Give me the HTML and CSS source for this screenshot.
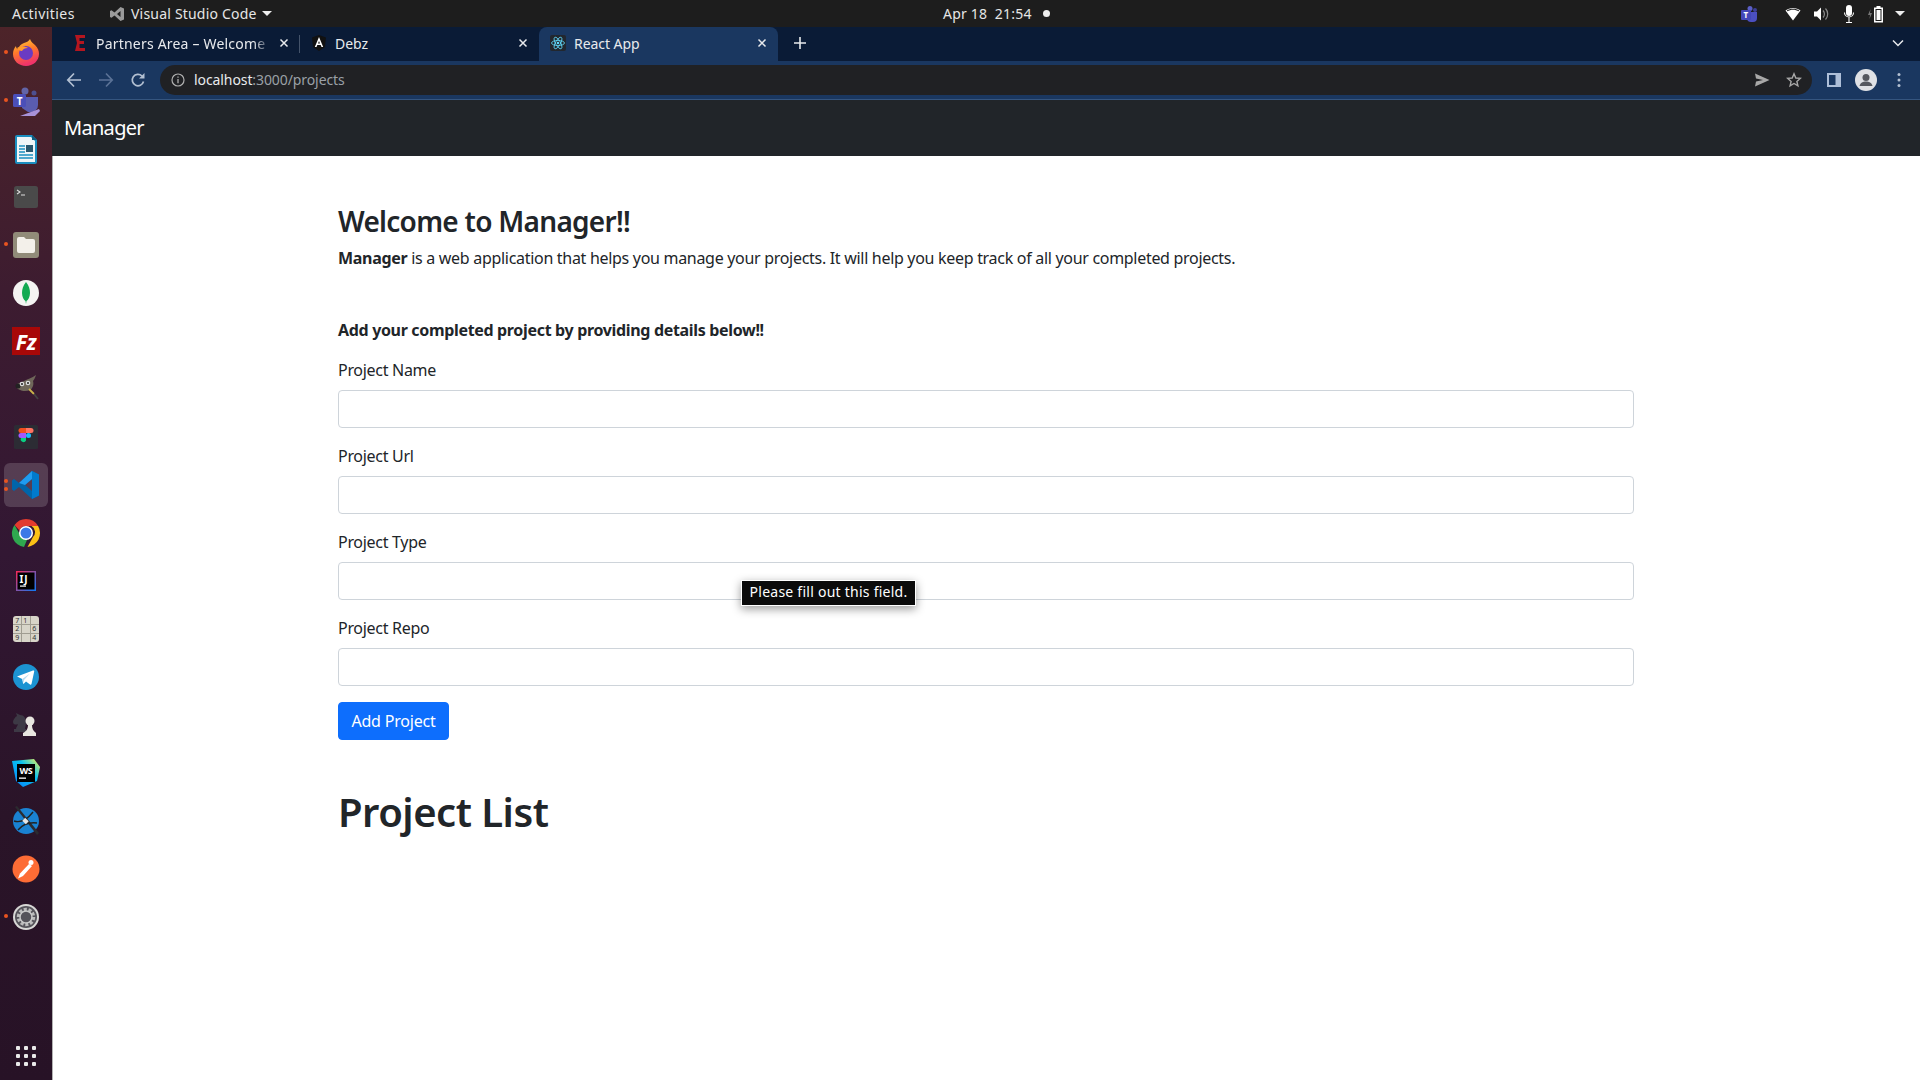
FILE: index.html
```html
<!DOCTYPE html>
<html>
<head>
  <meta charset="utf-8">
  <title>React App</title>
  <link rel="stylesheet" href="styles.css">
</head>
<body>

<!-- gnome top bar -->
<div class="topbar">
  <div class="top-left">
    <span class="activities">Activities</span>
    <svg class="top-app-icon" width="16" height="16" viewBox="0 0 16 16"><path fill="#9a9a9a" d="M11.5 1 15 2.600v10.800L11.500 15 5.500 9.500 2.500 11.800 1 11V5l1.500-.8 3 2.300zM11.500 5 8 8l3.500 3z"/></svg>
    <span class="top-app-name">Visual Studio Code</span>
    <span class="caret"></span>
  </div>
  <div class="clock">Apr 18&nbsp; 21:54</div>
  <span class="clock-dot"></span>
  <div class="tray">
    <svg class="tray-teams" width="18" height="18" viewBox="0 0 18 18"><circle cx="10" cy="3.500" r="2.500" fill="#5b5fc7"/><circle cx="15" cy="5" r="2" fill="#3d3f99"/><path fill="#4b4fc0" d="M7 7h10v6a4 4 0 0 1-4 4H11a4 4 0 0 1-4-4z"/><rect x="1" y="5" width="10" height="10" rx="1" fill="#4347b8"/><text x="6" y="13" class="tray-t">T</text></svg>
    <svg class="tray-wifi" width="16" height="16" viewBox="0 0 16 16"><path fill="#fff" d="M0.500 4.500C4.500 1 11.500 1 15.500 4.500L8 14.500z"/><path fill="#1d1d1d" d="M1.800 4.600C5.300 2 10.700 2 14.200 4.600L13.700 5.300C10.400 3.100 5.600 3.100 2.300 5.300z"/></svg>
    <svg class="tray-vol" width="16" height="16" viewBox="0 0 16 16"><path fill="#fff" d="M1 5.500h3L8 1.500v13l-4-4H1z"/><path fill="none" stroke="#8c8c8c" stroke-width="1.200" d="M10 4.500a5 5 0 0 1 0 7M12.500 2.500a8 8 0 0 1 0 11"/></svg>
    <svg class="tray-mic" width="12" height="20" viewBox="0 0 12 20"><rect x="3" y="1" width="6" height="11" rx="3" fill="#fff"/><path fill="none" stroke="#fff" stroke-width="1.100" d="M1.500 8.500a4.500 4.500 0 0 0 9 0M6 13v5M3 18.500h6"/></svg>
    <svg class="tray-batt" width="20" height="18" viewBox="0 0 20 18"><path fill="#777" d="M3.500 4 1 10h2l-.5 4L5 8H3z"/><rect x="7.500" y="3" width="8" height="14" fill="#fff" stroke="#fff"/><rect x="8.500" y="4" width="6" height="12" fill="#1d1d1d"/><rect x="9.500" y="5" width="4" height="10" fill="#fff"/><rect x="9.500" y="1" width="4" height="2" fill="#fff"/></svg>
    <span class="caret"></span>
  </div>
</div>

<div class="desktop">

  <!-- ubuntu dock -->
  <div class="dock">
    <div class="dock-item running">
      <svg width="32" height="32" viewBox="0 0 32 32"><defs><linearGradient id="ffx" x1="0" y1="0" x2="0.300" y2="1"><stop offset="0" stop-color="#ffd43a"/><stop offset="0.500" stop-color="#ff7a2a"/><stop offset="1" stop-color="#f0336a"/></linearGradient></defs><path fill="url(#ffx)" d="M20 2c1 3 3 4 5 6 3 3 4 6 4 9 0 7-6 12-13 12S3 24 3 17c0-3 1-6 3-8 0 2 1 3 2 3 1-3 3-5 6-6 3-1 5-2 6-4z"/><circle cx="16" cy="16" r="7" fill="#6a3bc2"/><path fill="#ff9a2e" d="M7 11c3-2 8-2 11 0-3 0-5 1-6 3-2 0-4-1-5-3z"/></svg>
    </div>
    <div class="dock-item running">
      <svg width="32" height="32" viewBox="0 0 32 32"><circle cx="15" cy="6" r="3.500" fill="#6264a7"/><circle cx="24" cy="8" r="2.500" fill="#4d4f8f"/><path fill="#5a5cb0" d="M12 12h16v8a7 7 0 0 1-7 7h-3l-6-4z"/><rect x="3" y="9" width="13" height="13" rx="1.500" fill="#4b4fb8"/><text x="9.500" y="19.500" class="dock-t">T</text><path fill="#a892d8" d="M10 31 29 24l1 2-5 5z"/></svg>
    </div>
    <div class="dock-item">
      <svg width="32" height="32" viewBox="0 0 32 32"><path fill="#1a8ec0" d="M7 2h15l5 5v22a2 2 0 0 1-2 2H7a2 2 0 0 1-2-2V4a2 2 0 0 1 2-2z"/><path fill="#eef5f8" d="M7 4h14l4 4v21H7z"/><path fill="#0f5e80" d="M22 2l5 5h-5z"/><path stroke="#1a8ec0" stroke-width="1.400" d="M9 13h6M9 16h6M9 19h6M9 22h14M9 25h14"/><rect x="16" y="12" width="7" height="7" fill="#27566e"/></svg>
    </div>
    <div class="dock-item">
      <svg width="32" height="32" viewBox="0 0 32 32"><rect x="4" y="5" width="24" height="22" rx="2.500" fill="#4a4a4a"/><path fill="none" stroke="#ddd" stroke-width="1.100" d="M7 9l3 2-3 2M11 14h4"/></svg>
    </div>
    <div class="dock-item running">
      <svg width="32" height="32" viewBox="0 0 32 32"><rect x="3" y="3" width="26" height="26" rx="3" fill="#918b79"/><path fill="#f3f0ea" d="M7 10a2 2 0 0 1 2-2h5l2 2h7a2 2 0 0 1 2 2v10a2 2 0 0 1-2 2H9a2 2 0 0 1-2-2z"/></svg>
    </div>
    <div class="dock-item">
      <svg width="32" height="32" viewBox="0 0 32 32"><circle cx="16" cy="16" r="13" fill="#f4f4f2"/><path fill="#13aa52" d="M16 5c3 4 4 7 4 11 0 4-2 7-3.500 8L16 27l-.5-3C14 23 12 20 12 16c0-4 1-7 4-11z"/></svg>
    </div>
    <div class="dock-item">
      <svg width="32" height="32" viewBox="0 0 32 32"><rect x="2" y="2" width="28" height="28" fill="#a80808"/><text x="16" y="25" class="dock-fz">Fz</text></svg>
    </div>
    <div class="dock-item">
      <svg width="32" height="32" viewBox="0 0 32 32"><path fill="#6f675a" d="M6 12c3-3 5-2 8-4 3-2 8-3 12-6-1 3-2 5-3 6 1 3 0 7-3 9-4 2-9 1-12-1-1-1-2-2-2-4z"/><circle cx="8" cy="13" r="2.500" fill="#222"/><circle cx="12" cy="11" r="2.300" fill="#ddd"/><circle cx="12" cy="11" r="1" fill="#222"/><circle cx="18" cy="10" r="2.300" fill="#ddd"/><circle cx="18" cy="10" r="1" fill="#222"/><path stroke="#cbb24a" stroke-width="1.800" d="M19 16l5 5"/><path stroke="#444" stroke-width="1.800" d="M24 21l4 5"/></svg>
    </div>
    <div class="dock-item">
      <svg width="32" height="32" viewBox="0 0 32 32"><rect x="4" y="4" width="24" height="24" rx="1.500" fill="#2c2c34"/><path fill="#f24e1e" d="M11 7h5v5h-5a2.500 2.500 0 0 1 0-5z"/><path fill="#ff7262" d="M16 7h5a2.500 2.500 0 0 1 0 5h-5z"/><path fill="#a259ff" d="M11 12h5v5h-5a2.500 2.500 0 0 1 0-5z"/><circle cx="18.500" cy="14.500" r="2.500" fill="#1abcfe"/><path fill="#0acf83" d="M11 17h5v2.500a2.500 2.500 0 1 1-5-2.500z"/></svg>
    </div>
    <div class="dock-item active double">
      <svg width="32" height="32" viewBox="0 0 32 32"><path fill="#0065a9" d="M22 2 29 5.500v21L22 30 9 18 4 22 2 20.500v-9L4 10l5 4zM22 10l-7 6 7 6z"/><path fill="#007acc" d="M22 2l7 3.500v21L22 30z"/><path fill="#1f9cf0" d="M22 2v8l-7 6-6-2z"/></svg>
    </div>
    <div class="dock-item">
      <svg width="32" height="32" viewBox="0 0 32 32"><path fill="#e33b2e" d="M16 2a14 14 0 0 1 12.100 7H16a7 7 0 0 0-6.500 4.400L4.500 8A14 14 0 0 1 16 2z"/><path fill="#fbc116" d="M28.100 9A14 14 0 0 1 17.500 30l5.500-10a7 7 0 0 0-1.500-11z"/><path fill="#2fa84f" d="M4.500 8l6 10.500a7 7 0 0 0 7 3.300L14 30A14 14 0 0 1 4.500 8z"/><circle cx="16" cy="16" r="7" fill="#fff"/><circle cx="16" cy="16" r="5.500" fill="#3b78e7"/></svg>
    </div>
    <div class="dock-item">
      <svg width="32" height="32" viewBox="0 0 32 32"><defs><linearGradient id="ijb" x1="0" y1="0" x2="1" y2="1"><stop offset="0" stop-color="#fe2857"/><stop offset="1" stop-color="#087cfa"/></linearGradient></defs><rect x="6" y="6" width="20" height="20" fill="url(#ijb)"/><rect x="7.500" y="7.500" width="17" height="17" fill="#000"/><text x="14" y="17.500" class="dock-ij">IJ</text><rect x="10" y="20.500" width="6" height="1.200" fill="#fff"/></svg>
    </div>
    <div class="dock-item">
      <svg width="32" height="32" viewBox="0 0 32 32"><rect x="3" y="3" width="26" height="26" rx="3" fill="#d8d5c9"/><path stroke="#a09d91" stroke-width="1" d="M3 11.500h26M3 20.500h26M11.500 3v26M20.500 3v26"/><text x="7" y="10" class="dock-num">7</text><text x="15" y="10" class="dock-num">1</text><text x="7" y="18" class="dock-num">2</text><text x="24" y="18" class="dock-num">6</text><text x="7" y="27" class="dock-num">9</text><text x="24" y="27" class="dock-num">4</text></svg>
    </div>
    <div class="dock-item">
      <svg width="32" height="32" viewBox="0 0 32 32"><circle cx="16" cy="16" r="13" fill="#1c93d2"/><path fill="#fff" d="M7 15.500 23 9.500c.8-.3 1.400.2 1.200 1.100L21.500 23c-.2.800-.8 1-1.500.6l-4-3-2 2c-.4.400-.9.200-1-.3l-.8-4.300z"/><path fill="#b9dcf0" d="M12.200 18 20 12.500l-6 6.500-.3 3z"/></svg>
    </div>
    <div class="dock-item">
      <svg width="32" height="32" viewBox="0 0 32 32"><path fill="#3d3945" d="M3 13c0-2 2-5 4-6L6 4l4 2c4 0 6 3 6 8 0 2-1 4-1 6H6c0-2 2-4 2-5-1 1-5 1-5-2z"/><path fill="#3d3945" d="M4 20h12v3H4z"/><circle cx="20" cy="12" r="4.500" fill="#e8e6e0"/><path fill="#e8e6e0" d="M18 16h4c0 3 1 6 4 8v3H13v-3c4-2 5-5 5-8z"/></svg>
    </div>
    <div class="dock-item">
      <svg width="32" height="32" viewBox="0 0 32 32"><defs><linearGradient id="wsb" x1="0" y1="1" x2="1" y2="0"><stop offset="0" stop-color="#087cfa"/><stop offset="0.600" stop-color="#07c3f2"/><stop offset="1" stop-color="#fcf84a"/></linearGradient></defs><path fill="url(#wsb)" d="M2 4 24 2l6 8-3 14-14 6-7-6z"/><rect x="7" y="7" width="18" height="18" fill="#000"/><text x="16" y="17" class="dock-ws">WS</text><rect x="9" y="20.500" width="7" height="1.300" fill="#fff"/></svg>
    </div>
    <div class="dock-item">
      <svg width="32" height="32" viewBox="0 0 32 32"><circle cx="16" cy="16" r="13" fill="#1a82d2"/><path fill="#2b2b30" d="M5 2l2-1 22 27-2 2z"/><path fill="none" stroke="#222" stroke-width="1.400" d="M4 16c6 2 12 0 19-9M8 25c5-6 11-8 19-7"/><rect x="13" y="14" width="5" height="4" fill="#e6e6e6" transform="rotate(45 15.500 16)"/></svg>
    </div>
    <div class="dock-item">
      <svg width="32" height="32" viewBox="0 0 32 32"><circle cx="16" cy="16" r="13.500" fill="#fd6c35"/><circle cx="21" cy="9.500" r="2.500" fill="#fff"/><path fill="#fff" d="M19 11l3 2-9 10-5 2.500 2-5z"/></svg>
    </div>
    <div class="dock-item running">
      <svg width="32" height="32" viewBox="0 0 32 32"><circle cx="16" cy="16" r="13" fill="#d8d8d6"/><circle cx="16" cy="16" r="11" fill="#55535a"/><circle cx="16" cy="16" r="7.500" fill="none" stroke="#bcbcbc" stroke-width="3.500" stroke-dasharray="3 1.700"/><circle cx="16" cy="16" r="6" fill="none" stroke="#c8c8c8" stroke-width="1.500"/></svg>
    </div>
    <div class="dock-apps">
      <span></span><span></span><span></span>
      <span></span><span></span><span></span>
      <span></span><span></span><span></span>
    </div>
  </div>

  <div class="browser">
    <!-- tab strip -->
    <div class="tabstrip">
      <div class="tab sep">
        <svg class="favicon" width="16" height="16" viewBox="0 0 16 16"><path fill="#b5161f" d="M3 0h10v3H7.500v3H12v3H7.500v4H13v3H3l2-8z"/></svg>
        <span class="tab-title fade">Partners Area – Welcome</span>
        <svg class="tab-close" width="10" height="10" viewBox="0 0 10 10"><path stroke="#e8eaed" stroke-width="1.500" d="M1.500 1.500l7 7M8.500 1.500l-7 7"/></svg>
      </div>
      <div class="tab">
        <svg class="favicon" width="16" height="16" viewBox="0 0 16 16"><path fill="#111" d="M8 0 15 2.500 14 12 8 16 2 12 1 2.500z"/><path fill="#fff" d="M8 2 3.800 12h1.700l.8-2h3.400l.8 2h1.700zM7 8.500l1-2.500 1 2.500z"/></svg>
        <span class="tab-title">Debz</span>
        <svg class="tab-close" width="10" height="10" viewBox="0 0 10 10"><path stroke="#e8eaed" stroke-width="1.500" d="M1.500 1.500l7 7M8.500 1.500l-7 7"/></svg>
      </div>
      <div class="tab tab-active">
        <svg class="favicon" width="16" height="16" viewBox="0 0 16 16"><rect width="16" height="16" rx="2" fill="#22272e"/><g fill="none" stroke="#61dafb" stroke-width=".8"><ellipse cx="8" cy="8" rx="6.500" ry="2.500"/><ellipse cx="8" cy="8" rx="6.500" ry="2.500" transform="rotate(60 8 8)"/><ellipse cx="8" cy="8" rx="6.500" ry="2.500" transform="rotate(120 8 8)"/></g><circle cx="8" cy="8" r="1.300" fill="#61dafb"/></svg>
        <span class="tab-title">React App</span>
        <svg class="tab-close" width="10" height="10" viewBox="0 0 10 10"><path stroke="#e8eaed" stroke-width="1.500" d="M1.500 1.500l7 7M8.500 1.500l-7 7"/></svg>
      </div>
      <svg class="new-tab" width="12" height="12" viewBox="0 0 12 12"><path stroke="#e8eaed" stroke-width="1.600" d="M6 0v12M0 6h12"/></svg>
      <svg class="tab-search" width="12" height="8" viewBox="0 0 12 8"><path fill="none" stroke="#e8eaed" stroke-width="1.500" d="M1 1.500l5 5 5-5"/></svg>
    </div>

    <!-- toolbar -->
    <div class="toolbar">
      <svg class="nav-btn" width="16" height="16" viewBox="0 0 16 16"><path fill="none" stroke="#b3c0d2" stroke-width="1.700" d="M15 8H2M8 1.500 1.800 8 8 14.500"/></svg>
      <svg class="nav-btn" width="16" height="16" viewBox="0 0 16 16"><path fill="none" stroke="#5b7296" stroke-width="1.700" d="M1 8h13M8 1.500 14.200 8 8 14.500"/></svg>
      <svg class="nav-btn" width="16" height="16" viewBox="0 0 16 16"><path fill="none" stroke="#b3c0d2" stroke-width="1.700" d="M13.500 9.500A5.700 5.700 0 1 1 12 4"/><path fill="#b3c0d2" d="M14.500 1v5.500H9z"/></svg>
      <div class="omnibox">
        <svg class="info-icon" width="14" height="14" viewBox="0 0 14 14"><circle cx="7" cy="7" r="6" fill="none" stroke="#b0b0b0" stroke-width="1.200"/><path stroke="#b0b0b0" stroke-width="1.300" d="M7 6v4.200M7 3.500v1.300"/></svg>
        <span class="url">localhost<span class="url-rest">:3000/projects</span></span>
        <svg class="omni-send" width="16" height="14" viewBox="0 0 16 14"><path fill="#a8a8a8" d="M1 0.500 15.500 7 1 13.500 2 8.500 9 7 2 5.500z"/></svg>
        <svg class="omni-star" width="16" height="16" viewBox="0 0 16 16"><path fill="none" stroke="#a8a8a8" stroke-width="1.400" d="M8 1.800 9.800 6l4.500.4-3.400 3 1 4.400L8 11.500l-3.900 2.300 1-4.400-3.400-3L6.200 6z"/></svg>
      </div>
      <svg class="tool-panel" width="14" height="14" viewBox="0 0 14 14"><rect width="14" height="14" fill="#aebfd8"/><rect x="2" y="2" width="6.500" height="10" fill="#1a3760"/></svg>
      <svg class="tool-avatar" width="22" height="22" viewBox="0 0 22 22"><circle cx="11" cy="11" r="11" fill="#dfe1e5"/><circle cx="11" cy="8.500" r="3.500" fill="#55585f"/><path fill="#55585f" d="M4.500 17c1-3.500 3.500-4.500 6.500-4.500s5.500 1 6.500 4.500z"/></svg>
      <svg class="tool-menu" width="4" height="16" viewBox="0 0 4 16"><circle cx="2" cy="2.500" r="1.500" fill="#b3c0d2"/><circle cx="2" cy="8" r="1.500" fill="#b3c0d2"/><circle cx="2" cy="13.500" r="1.500" fill="#b3c0d2"/></svg>
    </div>

    <!-- the page -->
    <div class="navbar"><span class="brand">Manager</span></div>
    <div class="page">
      <h3>Welcome to Manager!!</h3>
      <p class="intro"><b>Manager</b> is a web application that helps you manage your projects. It will help you keep track of all your completed projects.</p>
      <p class="add-title">Add your completed project by providing details below!!</p>
      <form>
        <div class="field">
          <label>Project Name</label>
          <input type="text">
        </div>
        <div class="field">
          <label>Project Url</label>
          <input type="text">
        </div>
        <div class="field has-tip">
          <label>Project Type</label>
          <input type="text">
          <div class="tooltip">Please fill out this field.</div>
        </div>
        <div class="field">
          <label>Project Repo</label>
          <input type="text">
        </div>
        <button type="button" class="btn">Add Project</button>
      </form>
      <h1>Project List</h1>
    </div>
  </div>
</div>

</body>
</html>
```

FILE: styles.css
```css
* {
  box-sizing: border-box;
}
html, body {
  margin: 0;
  height: 100%;
  overflow: hidden;
}
body {
  display: flex;
  flex-direction: column;
  font-family: "Noto Sans", "Open Sans", sans-serif;
  font-size: 16px;
  letter-spacing: -0.3px;
  color: #212529;
  background: #fff;
}

/* top bar */
.topbar {
  display: flex;
  align-items: center;
  height: 27px;
  flex: none;
  background: #1d1d1d;
  color: #e6e6e6;
  font-size: 14px;
  letter-spacing: 0.2px;
}
.top-left {
  display: flex;
  align-items: center;
  width: 943px;
  padding-left: 12px;
}
.activities {
  width: 97px;
  letter-spacing: 0.45px;
}
.top-app-name {
  margin-left: 6px;
}
.caret {
  width: 0;
  height: 0;
  border-left: 5px solid transparent;
  border-right: 5px solid transparent;
  border-top: 5px solid #eee;
  margin-left: 5px;
}
.clock {
  width: 100px;
}
.clock-dot {
  width: 7px;
  height: 7px;
  border-radius: 50%;
  background: #eee;
}
.tray {
  display: flex;
  align-items: center;
  margin-left: auto;
  padding-right: 15px;
}
.tray-wifi { margin-left: 27px; }
.tray-vol { margin-left: 12px; }
.tray-mic { margin-left: 14px; }
.tray-batt { margin-left: 12px; }
.tray .caret { margin-left: 8px; }
.tray-t {
  fill: #fff;
  font-size: 8px;
  font-weight: bold;
  text-anchor: middle;
}

.desktop {
  display: flex;
  flex: 1;
  min-height: 0;
}

/* dock */
.dock {
  display: flex;
  flex-direction: column;
  align-items: center;
  flex: none;
  width: 52px;
  padding-top: 1.500px;
  padding-bottom: 14px;
  background: linear-gradient(180deg, #4d2429 0%, #3d1c30 25%, #321733 50%, #2a1428 75%, #271226 100%);
  box-shadow: 1px 0 0 rgba(0,0,0,0.3);
}
.dock-item {
  position: relative;
  display: flex;
  align-items: center;
  justify-content: center;
  width: 44px;
  height: 48px;
  flex: none;
}
.dock-item.active {
  background: rgba(255,255,255,0.16);
  border-radius: 6px;
  height: 44px;
  margin: 2px 0;
}
.dock-item.running::before,
.dock-item.double::before,
.dock-item.double::after {
  content: "";
  position: absolute;
  left: 0;
  top: 21px;
  width: 4px;
  height: 4px;
  border-radius: 50%;
  background: #e95420;
}
.dock-item.double::before { top: 16px; }
.dock-item.double::after { top: 24px; }
.dock-t {
  fill: #fff;
  font-size: 10px;
  font-weight: bold;
  text-anchor: middle;
}
.dock-fz {
  fill: #fff;
  font-size: 21px;
  font-weight: bold;
  font-style: italic;
  text-anchor: middle;
}
.dock-ij {
  fill: #fff;
  font-size: 10px;
  font-weight: bold;
  letter-spacing: 1px;
  text-anchor: middle;
}
.dock-ws {
  fill: #fff;
  font-size: 9px;
  font-weight: bold;
  text-anchor: middle;
}
.dock-num {
  fill: #333;
  font-size: 7px;
  text-anchor: middle;
}
.dock-apps {
  display: grid;
  grid-template-columns: repeat(3, 4px);
  gap: 4px;
  margin-top: auto;
}
.dock-apps span {
  width: 4px;
  height: 4px;
  background: #e9e9e9;
  border-radius: 1px;
}

.browser {
  display: flex;
  flex-direction: column;
  flex: 1;
  min-width: 0;
}

/* tabs */
.tabstrip {
  display: flex;
  align-items: flex-end;
  height: 34px;
  flex: none;
  padding-left: 9px;
  background: #0a1b36;
  color: #e8eaed;
  font-size: 14px;
  letter-spacing: -0.05px;
}
.tab {
  display: flex;
  align-items: center;
  width: 239px;
  height: 34px;
  padding: 0 11px 2px 8px;
  position: relative;
}
.tab.sep::after {
  content: "";
  position: absolute;
  right: 0;
  top: 8px;
  bottom: 8px;
  width: 1px;
  background: #44536a;
}
.tab-active {
  background: #1a3760;
  border-radius: 8px 8px 0 0;
}
.favicon {
  flex: none;
  margin-left: 3px;
  margin-right: 8px;
}
.tab-title {
  flex: 1;
  min-width: 0;
  white-space: nowrap;
  overflow: hidden;
}
.tab-title.fade {
  letter-spacing: 0.2px;
  -webkit-mask-image: linear-gradient(90deg, #000 92%, rgba(0,0,0,0.25) 100%);
  mask-image: linear-gradient(90deg, #000 92%, rgba(0,0,0,0.25) 100%);
}
.tab-close {
  flex: none;
  margin-left: 12px;
}
.new-tab {
  align-self: center;
  margin-left: 16px;
  margin-bottom: 2px;
}
.tab-search {
  align-self: center;
  margin-left: auto;
  margin-right: 16px;
  margin-bottom: 2px;
}

/* toolbar */
.toolbar {
  display: flex;
  align-items: center;
  height: 39px;
  flex: none;
  padding: 0 0 1px 14px;
  background: #1a3760;
  border-bottom: 1px solid #35557f;
}
.nav-btn {
  flex: none;
  margin-right: 16px;
}
.omnibox {
  display: flex;
  align-items: center;
  width: 1652px;
  height: 30px;
  margin-left: -2px;
  padding: 0 10px 0 11px;
  border-radius: 15px;
  background: #202124;
  font-size: 14px;
  letter-spacing: -0.09px;
}
.url {
  margin-left: 9px;
  color: #e8eaed;
}
.url-rest {
  color: #9aa0a6;
}
.omni-send {
  margin-left: auto;
  margin-right: 16px;
}
.tool-panel {
  flex: none;
  margin-left: 15px;
}
.tool-avatar {
  flex: none;
  margin-left: 14px;
}
.tool-menu {
  flex: none;
  margin-left: 20px;
}

/* page content, bootstrap sized */
.navbar {
  display: flex;
  align-items: center;
  height: 56px;
  flex: none;
  padding-left: 12px;
  padding-bottom: 2px;
  background: #212529;
}
.brand {
  color: #fff;
  font-size: 20px;
  letter-spacing: -0.7px;
}
.page {
  flex: 1;
  padding: 48px 286px 0;
}
h3 {
  margin: 0 0 8px;
  font-size: 28px;
  font-weight: 600;
  letter-spacing: -0.72px;
  line-height: 34px;
}
.intro {
  margin: 0;
  line-height: 24px;
}
.add-title {
  margin: 48px 0 0;
  font-weight: bold;
  letter-spacing: -0.33px;
  line-height: 24px;
}
form {
  margin-top: 16px;
}
.field {
  margin-bottom: 16px;
}
.has-tip {
  position: relative;
}
label {
  display: block;
  margin-bottom: 8px;
  line-height: 24px;
}
input {
  display: block;
  width: 100%;
  height: 38px;
  border: 1px solid #ced4da;
  border-radius: 4px;
  background: #fff;
}
.btn {
  display: block;
  height: 38px;
  width: 111px;
  padding: 0;
  border: 1px solid #0d6efd;
  border-radius: 4px;
  background: #0d6efd;
  color: #fff;
  font: inherit;
  letter-spacing: -0.2px;
}
.tooltip {
  position: absolute;
  left: 403px;
  top: 50px;
  width: 175px;
  height: 26px;
  line-height: 22px;
  text-align: center;
  font-size: 14px;
  letter-spacing: 0.25px;
  color: #fff;
  background: #0b0b0b;
  border: 1px solid #fff;
  box-shadow: 0 3px 10px rgba(0,0,0,0.4);
  white-space: nowrap;
}
h1 {
  margin: 48px 0 0;
  font-size: 40px;
  font-weight: 600;
  letter-spacing: -0.5px;
  line-height: 48px;
}
```
